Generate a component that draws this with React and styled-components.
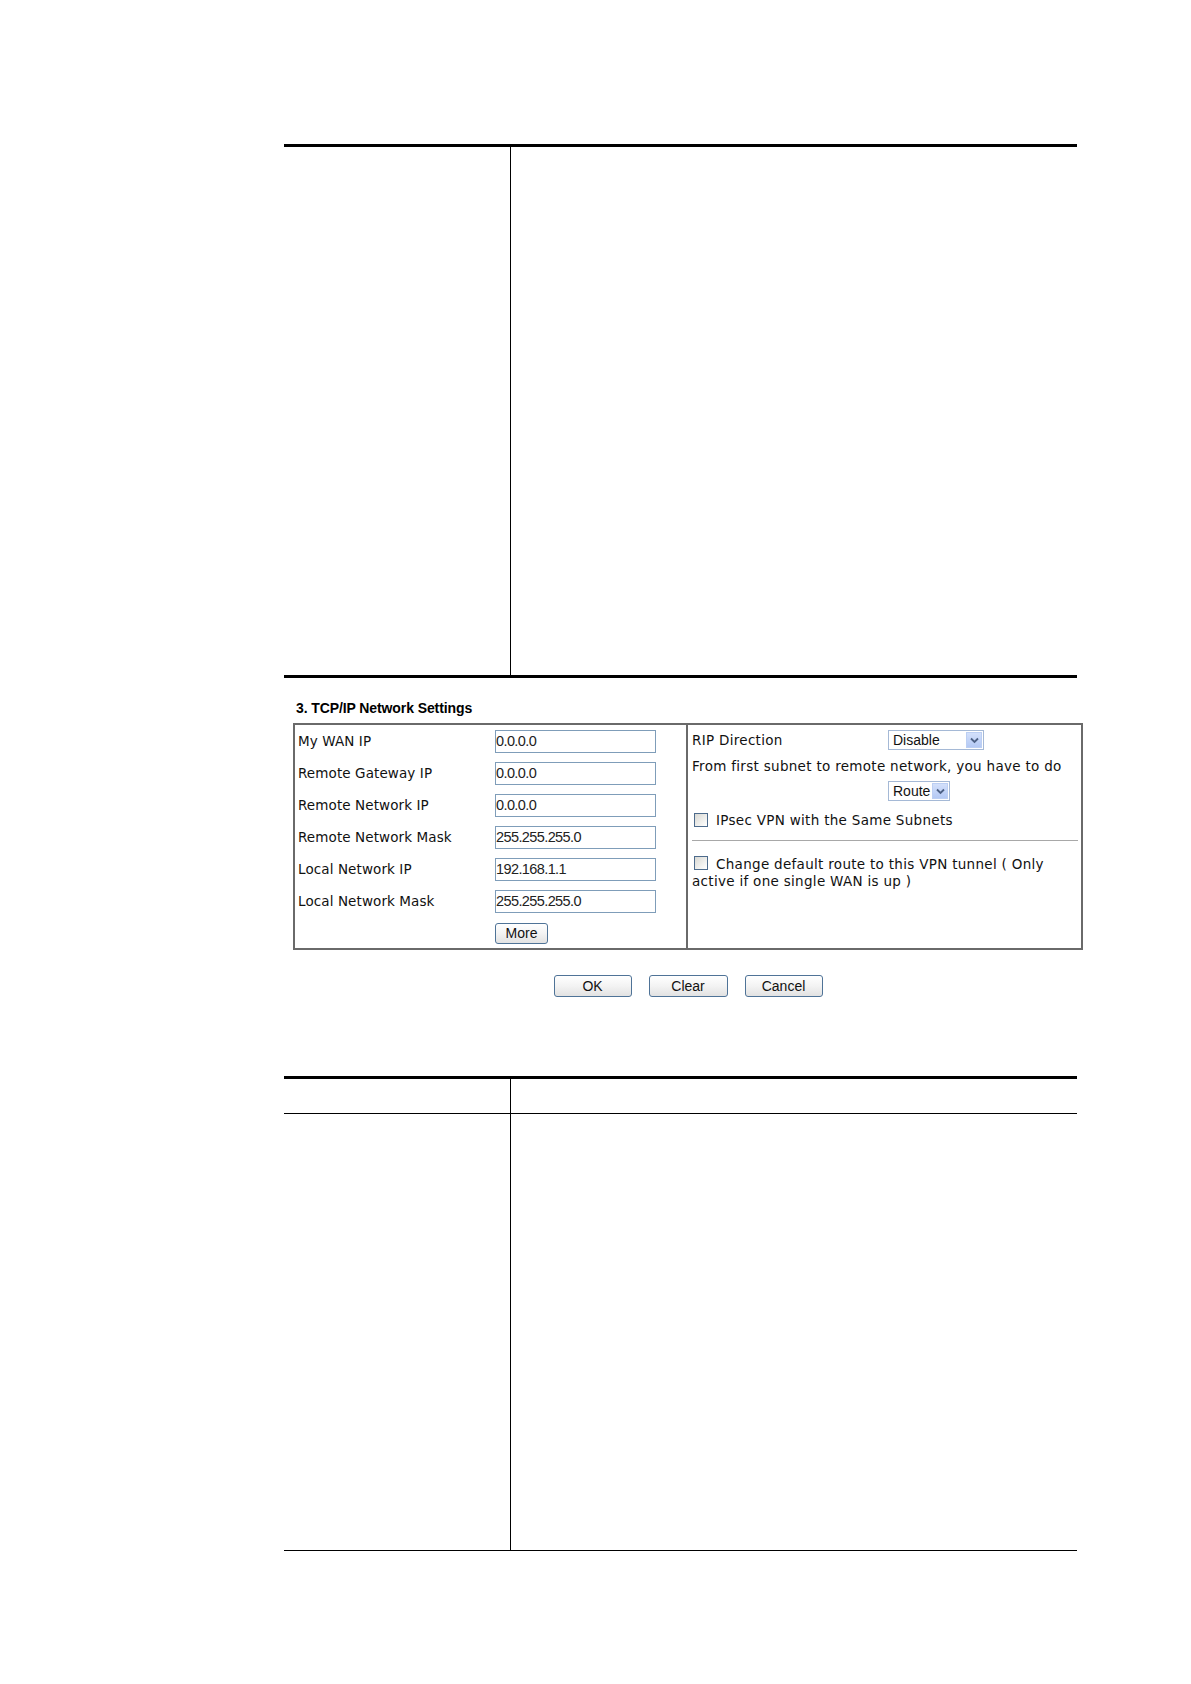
import React from "react";
import styled, { createGlobalStyle } from "styled-components";

const GlobalStyle = createGlobalStyle`
  html, body {
    margin: 0;
    padding: 0;
    background: #ffffff;
  }
  body {
    font-family: "DejaVu Sans", Verdana, sans-serif;
    color: #000;
  }
`;

const Page = styled.div`
  width: 1191px;
  min-height: 1684px;
  padding-top: 144px;
  padding-left: 284px;
  box-sizing: border-box;
`;

const Table = styled.div`
  width: 793px;
  display: grid;
  grid-template-columns: 226px 1fr;
  grid-template-rows: ${({ $rows }) => $rows};
  border-top: 3px solid #000;
  border-bottom: ${({ $bottom }) => $bottom};
`;

const Cell = styled.div`
  border-left: ${({ $right }) => ($right ? "1px solid #000" : "none")};
  border-bottom: ${({ $line }) => ($line ? "1px solid #000" : "none")};
`;

const SectionTitle = styled.div`
  margin: 22px 0 0 12px;
  font-family: "Liberation Sans", Arial, sans-serif;
  font-weight: bold;
  font-size: 14px;
  line-height: 16px;
  letter-spacing: -0.1px;
`;

const SettingsBox = styled.div`
  margin: 7px 0 0 9px;
  width: 790px;
  height: 227px;
  box-sizing: border-box;
  border: 2px solid #6a6a6a;
  display: grid;
  grid-template-columns: 393px 1fr;
`;

const LeftPanel = styled.div`
  border-right: 2px solid #6a6a6a;
  display: flex;
  flex-direction: column;
`;

const FieldRow = styled.div`
  height: 32px;
  display: flex;
  align-items: center;
  padding-left: 3px;
`;

const Label = styled.div`
  width: 197px;
  font-size: 13.5px;
  letter-spacing: 0.1px;
  color: #111;
`;

const TextInput = styled.div`
  width: 161px;
  height: 23px;
  box-sizing: border-box;
  border: 1px solid #7f9db9;
  display: flex;
  align-items: center;
  padding-left: 0;
  font-family: "Liberation Sans", Arial, sans-serif;
  font-size: 14.5px;
  letter-spacing: -0.6px;
  color: #222;
`;

const Button = styled.div`
  width: ${({ $w }) => $w}px;
  height: ${({ $h }) => $h}px;
  box-sizing: border-box;
  border: 1px solid #4f7397;
  border-radius: 3px;
  background: linear-gradient(#ffffff, #f3f3f3 50%, #e2e2e2);
  display: flex;
  align-items: center;
  justify-content: center;
  font-family: "Liberation Sans", Arial, sans-serif;
  font-size: 14px;
  color: #111;
`;

const RightPanel = styled.div`
  padding: 4px 3px 0 4px;
  display: flex;
  flex-direction: column;
  letter-spacing: 0.3px;
`;

const Line = styled.div`
  display: flex;
  align-items: center;
  height: ${({ $h }) => $h}px;
  margin-top: ${({ $mt }) => $mt || 0}px;
  font-size: 13.5px;
  color: #111;
`;

const RipLabel = styled.div`
  width: 196px;
`;

const SelectBox = styled.div`
  width: ${({ $w }) => $w}px;
  height: 20px;
  box-sizing: border-box;
  border: 1px solid #a5b9d6;
  background: #fff;
  display: flex;
  align-items: center;
  justify-content: space-between;
  padding: 0 1px 0 4px;
  font-family: "Liberation Sans", Arial, sans-serif;
  font-size: 14px;
  letter-spacing: 0;
  color: #111;
`;

const SelectArrow = styled.span`
  width: 16px;
  height: 16px;
  box-sizing: border-box;
  background: linear-gradient(#d3e0fb, #b4c9f4);
  border: 1px solid #bccff3;
  display: flex;
  align-items: center;
  justify-content: center;
`;

const Check = styled.span`
  width: 14px;
  height: 14px;
  box-sizing: border-box;
  border: 1px solid #4d6b8c;
  background: linear-gradient(135deg, #d8d8d3, #f4f4f2 70%, #ffffff);
  margin: 0 8px 0 2px;
  flex-shrink: 0;
`;

const Divider = styled.div`
  margin-top: 12px;
  height: 1px;
  background: #a8a8a8;
`;

const Paragraph = styled.div`
  margin-top: 15px;
  font-size: 13.5px;
  line-height: 17px;
  color: #111;
`;

const InlineCheck = styled(Check)`
  display: inline-block;
  vertical-align: -1px;
  margin: 0 8px 0 2px;
`;

const ButtonBar = styled.div`
  margin: 25px 0 0 9px;
  width: 790px;
  display: flex;
  justify-content: center;
  gap: 17px;
`;

const Spacer = styled.div`
  height: 79px;
`;

const Arrow = () => (
  <SelectArrow>
    <svg width="9" height="7" viewBox="0 0 9 7">
      <path d="M1 1.5 L4.5 5 L8 1.5" fill="none" stroke="#4d6185" strokeWidth="1.8" />
    </svg>
  </SelectArrow>
);

const fields = [
  ["My WAN IP", "0.0.0.0"],
  ["Remote Gateway IP", "0.0.0.0"],
  ["Remote Network IP", "0.0.0.0"],
  ["Remote Network Mask", "255.255.255.0"],
  ["Local Network IP", "192.168.1.1"],
  ["Local Network Mask", "255.255.255.0"],
];

const App = () => {
  return (
    <Page>
      <GlobalStyle />
      <Table $rows="528px" $bottom="3px solid #000">
        <Cell />
        <Cell $right />
      </Table>

      <SectionTitle>3. TCP/IP Network Settings</SectionTitle>
      <SettingsBox>
        <LeftPanel>
          {fields.map(([label, value]) => (
            <FieldRow key={label}>
              <Label>{label}</Label>
              <TextInput>{value}</TextInput>
            </FieldRow>
          ))}
          <FieldRow>
            <Label />
            <Button $w={53} $h={21}>More</Button>
          </FieldRow>
        </LeftPanel>
        <RightPanel>
          <Line $h={22}>
            <RipLabel>RIP Direction</RipLabel>
            <SelectBox $w={96}>
              Disable
              <Arrow />
            </SelectBox>
          </Line>
          <Line $h={17} $mt={6}>From first subnet to remote network, you have to do</Line>
          <Line $h={22} $mt={6}>
            <RipLabel />
            <SelectBox $w={62}>
              Route
              <Arrow />
            </SelectBox>
          </Line>
          <Line $h={16} $mt={10}>
            <Check />
            IPsec VPN with the Same Subnets
          </Line>
          <Divider />
          <Paragraph>
            <InlineCheck />
            Change default route to this VPN tunnel ( Only active if one single WAN is up )
          </Paragraph>
        </RightPanel>
      </SettingsBox>

      <ButtonBar>
        <Button $w={78} $h={22}>OK</Button>
        <Button $w={79} $h={22}>Clear</Button>
        <Button $w={78} $h={22}>Cancel</Button>
      </ButtonBar>

      <Spacer />
      <Table $rows="35px 436px" $bottom="1px solid #000">
        <Cell $line />
        <Cell $right $line />
        <Cell />
        <Cell $right />
      </Table>
    </Page>
  );
};

export default App;
